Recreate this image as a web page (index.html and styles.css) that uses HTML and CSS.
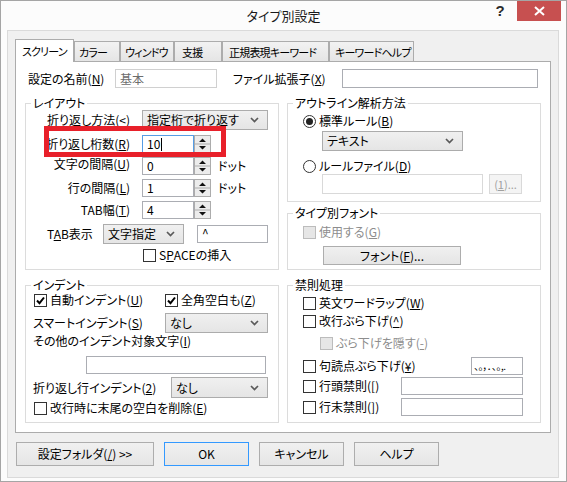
FILE: index.html
```html
<!DOCTYPE html>
<html>
<head>
    <meta charset="utf-8">
    <title>タイプ別設定</title>
    <link rel="stylesheet" href="styles.css">
</head>
<body>
<div class="window">
    <div class="titlebar">
        <div class="title">タイプ別設定</div>
        <div class="caption-buttons">
            <div class="help-button">?</div>
            <div class="close-button">
                <svg width="11" height="10" viewBox="0 0 11 10"><path d="M1 1 L10 9 M10 1 L1 9" stroke="#fff" stroke-width="2"/></svg>
            </div>
        </div>
    </div>

    <div class="client">
        <div class="tabs">
            <div class="tab active">スクリーン</div>
            <div class="tab">カラー</div>
            <div class="tab">ウィンドウ</div>
            <div class="tab">支援</div>
            <div class="tab">正規表現キーワード</div>
            <div class="tab">キーワードヘルプ</div>
        </div>

        <div class="page">
            <div class="name-row">
                <span class="name-label">設定の名前(<u>N</u>)</span>
                <div class="textbox readonly name-box">基本</div>
                <span class="ext-label">ファイル拡張子(<u>X</u>)</span>
                <div class="textbox ext-box"></div>
            </div>

            <div class="columns">
                <!-- left column -->
                <div class="column">
                    <fieldset class="group layout">
                        <legend>レイアウト</legend>
                        <div class="row row-method">
                            <span class="field-label">折り返し方法(<u>&lt;</u>)</span>
                            <div class="combo method-combo">
                                <span>指定桁で折り返す</span>
                                <svg class="chev" width="9" height="6" viewBox="0 0 9 6"><path d="M1 1 L4.5 4.5 L8 1" fill="none" stroke="#5a5a5a" stroke-width="1.7"/></svg>
                            </div>
                        </div>
                        <div class="row row-num first-num">
                            <span class="field-label">折り返し桁数(<u>R</u>)</span>
                            <div class="spin-field">
                                <div class="textbox num focused">10<span class="caret"></span></div>
                                <svg class="spin" width="17" height="18" viewBox="0 0 17 18"><rect x="0.5" y="0.5" width="16" height="17" fill="#ececec" stroke="#acacac"/><line x1="1" y1="9" x2="16" y2="9" stroke="#acacac"/><path d="M5 7 L8.5 3.5 L12 7 Z M5 11 L8.5 14.5 L12 11 Z" fill="#111"/></svg>
                            </div>
                            <div class="highlight"></div>
                        </div>
                        <div class="row row-num">
                            <span class="field-label raised">文字の間隔(<u>U</u>)</span>
                            <div class="spin-field">
                                <div class="textbox num">0</div>
                                <svg class="spin" width="17" height="18" viewBox="0 0 17 18"><rect x="0.5" y="0.5" width="16" height="17" fill="#ececec" stroke="#acacac"/><line x1="1" y1="9" x2="16" y2="9" stroke="#acacac"/><path d="M5 7 L8.5 3.5 L12 7 Z M5 11 L8.5 14.5 L12 11 Z" fill="#111"/></svg>
                            </div>
                            <span class="unit">ドット</span>
                        </div>
                        <div class="row row-num">
                            <span class="field-label">行の間隔(<u>L</u>)</span>
                            <div class="spin-field">
                                <div class="textbox num">1</div>
                                <svg class="spin" width="17" height="18" viewBox="0 0 17 18"><rect x="0.5" y="0.5" width="16" height="17" fill="#ececec" stroke="#acacac"/><line x1="1" y1="9" x2="16" y2="9" stroke="#acacac"/><path d="M5 7 L8.5 3.5 L12 7 Z M5 11 L8.5 14.5 L12 11 Z" fill="#111"/></svg>
                            </div>
                            <span class="unit">ドット</span>
                        </div>
                        <div class="row row-num">
                            <span class="field-label">TAB幅(<u>T</u>)</span>
                            <div class="spin-field">
                                <div class="textbox num">4</div>
                                <svg class="spin" width="17" height="18" viewBox="0 0 17 18"><rect x="0.5" y="0.5" width="16" height="17" fill="#ececec" stroke="#acacac"/><line x1="1" y1="9" x2="16" y2="9" stroke="#acacac"/><path d="M5 7 L8.5 3.5 L12 7 Z M5 11 L8.5 14.5 L12 11 Z" fill="#111"/></svg>
                            </div>
                        </div>
                        <div class="row row-tabview">
                            <span class="tabview-label">T<u>A</u>B表示</span>
                            <div class="combo tabview-combo">
                                <span>文字指定</span>
                                <svg class="chev" width="9" height="6" viewBox="0 0 9 6"><path d="M1 1 L4.5 4.5 L8 1" fill="none" stroke="#5a5a5a" stroke-width="1.7"/></svg>
                            </div>
                            <div class="textbox tabchar-box">^</div>
                        </div>
                        <div class="row row-space">
                            <span class="check"></span>S<u>P</u>ACEの挿入
                        </div>
                    </fieldset>

                    <fieldset class="group indent">
                        <legend>インデント</legend>
                        <div class="row row-auto">
                            <span class="auto-item"><span class="check"><svg width="9" height="9" viewBox="0 0 9 9"><path d="M1 4.5 L3.5 7.2 L8 1.5" fill="none" stroke="#000" stroke-width="2"/></svg></span>自動インデント(<u>U</u>)</span>
                            <span class="check"><svg width="9" height="9" viewBox="0 0 9 9"><path d="M1 4.5 L3.5 7.2 L8 1.5" fill="none" stroke="#000" stroke-width="2"/></svg></span>全角空白も(<u>Z</u>)
                        </div>
                        <div class="row row-smart">
                            <span class="smart-label">スマートインデント(<u>S</u>)</span>
                            <div class="combo smart-combo">
                                <span>なし</span>
                                <svg class="chev" width="9" height="6" viewBox="0 0 9 6"><path d="M1 1 L4.5 4.5 L8 1" fill="none" stroke="#5a5a5a" stroke-width="1.7"/></svg>
                            </div>
                        </div>
                        <div class="row row-other">その他のインデント対象文字(<u>I</u>)</div>
                        <div class="row row-otherbox">
                            <div class="textbox other-box"></div>
                        </div>
                        <div class="row row-wrapindent">
                            <span class="wrapindent-label">折り返し行インデント(<u>2</u>)</span>
                            <div class="combo wrapindent-combo">
                                <span>なし</span>
                                <svg class="chev" width="9" height="6" viewBox="0 0 9 6"><path d="M1 1 L4.5 4.5 L8 1" fill="none" stroke="#5a5a5a" stroke-width="1.7"/></svg>
                            </div>
                        </div>
                        <div class="row row-trim">
                            <span class="check"></span>改行時に末尾の空白を削除(<u>E</u>)
                        </div>
                    </fieldset>
                </div>

                <!-- right column -->
                <div class="column">
                    <fieldset class="group outline">
                        <legend>アウトライン解析方法</legend>
                        <div class="row row-radio1">
                            <span class="radio on"></span>標準ルール(<u>B</u>)
                        </div>
                        <div class="row row-rule">
                            <div class="combo rule-combo">
                                <span>テキスト</span>
                                <svg class="chev" width="9" height="6" viewBox="0 0 9 6"><path d="M1 1 L4.5 4.5 L8 1" fill="none" stroke="#5a5a5a" stroke-width="1.7"/></svg>
                            </div>
                        </div>
                        <div class="row row-radio2">
                            <span class="radio"></span>ルールファイル(<u>D</u>)
                        </div>
                        <div class="row row-rulefile">
                            <div class="textbox disabled rulefile-box"></div>
                            <div class="button disabled browse-button">(<u>1</u>)...</div>
                        </div>
                    </fieldset>

                    <fieldset class="group typefont">
                        <legend>タイプ別フォント</legend>
                        <div class="row row-usefont">
                            <span class="check disabled"></span><span class="muted">使用する(<u>G</u>)</span>
                        </div>
                        <div class="row row-fontbtn">
                            <div class="button font-button">フォント(<u>F</u>)...</div>
                        </div>
                    </fieldset>

                    <fieldset class="group kinsoku">
                        <legend>禁則処理</legend>
                        <div class="row k-wordwrap">
                            <span class="check"></span>英文ワードラップ(<u>W</u>)
                        </div>
                        <div class="row k-eol">
                            <span class="check"></span>改行ぶら下げ(<u>^</u>)
                        </div>
                        <div class="row k-hide">
                            <span class="check disabled"></span><span class="muted">ぶら下げを隠す(<u>-</u>)</span>
                        </div>
                        <div class="row k-punct">
                            <span class="check"></span>句読点ぶら下げ(<u>¥</u>)
                            <div class="textbox punct-box">、。，．､｡,.</div>
                        </div>
                        <div class="row k-head">
                            <span class="check"></span>行頭禁則(<u>[</u>)
                            <div class="textbox kinsoku-box"></div>
                        </div>
                        <div class="row k-tail">
                            <span class="check"></span>行末禁則(<u>]</u>)
                            <div class="textbox kinsoku-box"></div>
                        </div>
                    </fieldset>
                </div>
            </div>
        </div>

        <div class="dialog-buttons">
            <div class="button folder-button">設定フォルダ(<u>/</u>) &gt;&gt;</div>
            <div class="button default ok-button">OK</div>
            <div class="button">キャンセル</div>
            <div class="button">ヘルプ</div>
        </div>
    </div>
</div>
</body>
</html>
```

FILE: styles.css
```css
* {
    box-sizing: border-box;
}

body {
    margin: 0;
    font-family: "Noto Sans CJK JP", "Noto Sans", sans-serif;
    font-size: 12px;
    line-height: 14px;
    color: #000;
    font-feature-settings: "palt";
}

u {
    text-decoration: underline;
}

/* window frame */
.window {
    width: 567px;
    height: 482px;
    border: 1px solid #a5a5a5;
    background: #fcfcfc;
    display: flex;
    flex-direction: column;
}

.titlebar {
    height: 29px;
    display: grid;
}

.title,
.caption-buttons {
    grid-area: 1 / 1;
}

.title {
    justify-self: center;
    align-self: center;
    font-size: 13px;
    color: #1a1a1a;
    padding-top: 1px;
}

.caption-buttons {
    justify-self: end;
    display: flex;
    align-items: flex-start;
    margin-right: 5px;
}

.help-button {
    width: 26px;
    height: 20px;
    margin-right: 4px;
    display: flex;
    align-items: center;
    justify-content: center;
    font-family: "Liberation Sans", sans-serif;
    font-weight: bold;
    font-size: 15px;
    color: #2b2b2b;
}

.close-button {
    width: 44px;
    height: 20px;
    background: #c75050;
    display: flex;
    align-items: center;
    justify-content: center;
}

.client {
    flex: 1;
    margin: 0 7px 3px 6px;
    background: #f0f0f0;
    border: 1px solid #dadada;
    padding: 8px 0 0 7px;
    display: flex;
    flex-direction: column;
}

/* tab strip */
.tabs {
    height: 22px;
    display: flex;
    align-items: flex-end;
}

.tab {
    height: 20px;
    border: 1px solid #acacac;
    border-bottom: none;
    background: linear-gradient(#f2f2f2, #e5e5e5);
    padding: 2px 0 0 4px;
    font-size: 11px;
    letter-spacing: -0.8px;
    line-height: 16px;
    white-space: nowrap;
    overflow: hidden;
}

.tab.active {
    height: 23px;
    background: #fff;
    position: relative;
    z-index: 1;
    margin-bottom: -1px;
    padding: 3px 0 0 6px;
}

.tab:nth-child(1) { width: 59px; }
.tab:nth-child(2) { width: 46px; }
.tab:nth-child(3) { width: 54px; }
.tab:nth-child(4) { width: 48px; padding-left: 7px; }
.tab:nth-child(5) { width: 107px; padding-left: 6px; }
.tab:nth-child(6) { width: 85px; padding-left: 5px; }

.page {
    width: 536px;
    height: 372px;
    background: #fff;
    border: 1px solid #acacac;
    padding: 7px 0 0 9px;
}

/* controls */
.textbox {
    height: 18px;
    border: 1px solid #abadb3;
    background: #fff;
    padding: 0 4px;
    display: flex;
    align-items: center;
    white-space: nowrap;
    overflow: hidden;
}

.textbox.readonly {
    border-color: #d0d0d0;
    color: #6d6d6d;
}

.textbox.disabled {
    border-color: #d9d9d9;
}

.textbox.focused {
    border-color: #569de5;
}

.caret {
    display: inline-block;
    width: 1px;
    height: 13px;
    background: #000;
    margin-left: 1px;
}

.combo {
    height: 20px;
    border: 1px solid #acacac;
    background: linear-gradient(#f0f0f0, #e5e5e5);
    display: flex;
    align-items: center;
    justify-content: space-between;
    padding: 0 8px 0 4px;
    white-space: nowrap;
}

.button {
    height: 24px;
    border: 1px solid #adadad;
    background: linear-gradient(#f0f0f0, #e5e5e5);
    display: flex;
    align-items: center;
    justify-content: center;
    white-space: nowrap;
}

.button.default {
    border-color: #3399ff;
}

.button.disabled {
    border-color: #d9d9d9;
    background: #f4f4f4;
    color: #a0a0a0;
}

.check {
    width: 13px;
    height: 13px;
    flex: none;
    border: 1px solid #333;
    background: #fff;
    margin-right: 3px;
    display: flex;
    align-items: center;
    justify-content: center;
}

.check.disabled {
    border-color: #bcbcbc;
    background: #e6e6e6;
}

.radio {
    width: 13px;
    height: 13px;
    flex: none;
    border: 1px solid #333;
    border-radius: 50%;
    background: #fff;
    margin-right: 3px;
    display: flex;
    align-items: center;
    justify-content: center;
}

.radio.on::after {
    content: "";
    width: 7px;
    height: 7px;
    border-radius: 50%;
    background: #222;
}

.muted {
    color: #8d8d8d;
}

/* name row */
.name-row {
    display: flex;
    align-items: center;
    height: 19px;
    padding-left: 3px;
}

.name-label {
    width: 87px;
}

.name-box {
    width: 102px;
    height: 19px;
}

.ext-label {
    width: 109px;
    margin-left: 16px;
}

.ext-box {
    width: 196px;
    height: 19px;
}

.columns {
    display: grid;
    grid-template-columns: 254px 254px;
    column-gap: 8px;
    margin-top: 8px;
}

.column {
    display: flex;
    flex-direction: column;
}

/* group boxes */
.group {
    margin: 0;
    padding: 0;
    border: 1px solid #dcdcdc;
    min-width: 0;
}

.group legend {
    margin-left: 5px;
    padding: 0 2px;
    line-height: 14px;
}

.row {
    display: flex;
    align-items: center;
    white-space: nowrap;
}

/* layout group */
.layout {
    padding-bottom: 7px;
}

.field-label {
    width: 104px;
    margin-right: 12px;
    text-align: right;
}

.field-label.raised {
    margin-bottom: 4px;
}

.row-method {
    height: 20px;
}

.method-combo {
    width: 126px;
}

.row-num {
    height: 18px;
    margin-top: 4px;
}

.first-num {
    margin-top: 5px;
    position: relative;
}

.spin-field {
    display: flex;
}

.num {
    width: 52px;
}

.spin {
    display: block;
}

.unit {
    margin-left: 7px;
}

.highlight {
    position: absolute;
    left: 18px;
    top: -9px;
    width: 182px;
    height: 31px;
    border: 5px solid #e8202a;
}

.row-tabview {
    height: 20px;
    margin-top: 5px;
    padding-left: 21px;
}

.tabview-label {
    width: 56px;
}

.tabview-combo {
    width: 81px;
}

.tabchar-box {
    width: 71px;
    margin-left: 13px;
    align-items: flex-start;
}

.row-space {
    height: 14px;
    margin-top: 4px;
    padding-left: 117px;
}

/* indent group */
.indent {
    margin-top: 8px;
    padding-bottom: 6px;
}

.row-auto {
    height: 16px;
    padding-left: 8px;
}

.auto-item {
    width: 131px;
    display: flex;
    align-items: center;
}

.row-smart {
    height: 20px;
    margin-top: 5px;
    padding-left: 7px;
}

.smart-label {
    width: 132px;
}

.smart-combo {
    width: 103px;
}

.row-other {
    height: 14px;
    margin-top: 1px;
    padding-left: 7px;
}

.row-otherbox {
    height: 18px;
    margin-top: 8px;
    padding-left: 60px;
}

.other-box {
    width: 180px;
}

.row-wrapindent {
    height: 21px;
    margin-top: 3px;
    padding-left: 7px;
}

.wrapindent-label {
    width: 138px;
}

.wrapindent-combo {
    width: 97px;
    height: 21px;
}

.row-trim {
    height: 16px;
    margin-top: 2px;
    padding-left: 8px;
}

/* outline group */
.outline {
    padding-bottom: 7px;
}

.row-radio1 {
    height: 14px;
    margin-top: 4px;
    padding-left: 15px;
}

.row-rule {
    height: 20px;
    margin-top: 3px;
    padding-left: 34px;
}

.rule-combo {
    width: 141px;
}

.row-radio2 {
    height: 14px;
    margin-top: 8px;
    padding-left: 15px;
}

.row-rulefile {
    height: 20px;
    margin-top: 1px;
    padding-left: 34px;
}

.rulefile-box {
    width: 161px;
    height: 20px;
}

.browse-button {
    width: 33px;
    height: 20px;
    margin-left: 6px;
    font-size: 11px;
}

/* type font group */
.typefont {
    margin-top: 4px;
    padding-bottom: 4px;
}

.row-usefont {
    height: 14px;
    margin-top: 5px;
    padding-left: 15px;
}

.row-fontbtn {
    height: 19px;
    margin-top: 7px;
    padding-left: 35px;
}

.font-button {
    width: 138px;
    height: 19px;
}

/* kinsoku group */
.kinsoku {
    margin-top: 8px;
    padding-bottom: 6px;
}

.kinsoku .row {
    padding-left: 15px;
}

.k-wordwrap {
    height: 14px;
    margin-top: 4px;
}

.k-eol {
    height: 14px;
    margin-top: 4px;
}

.kinsoku .k-hide {
    height: 14px;
    margin-top: 8px;
    padding-left: 32px;
}

.k-punct {
    height: 18px;
    margin-top: 7px;
}

.k-head {
    height: 18px;
    margin-top: 2px;
}

.k-tail {
    height: 18px;
    margin-top: 3px;
}

.kinsoku .textbox {
    margin-left: auto;
    margin-right: 17px;
}

.punct-box {
    width: 52px;
    font-size: 10px;
    letter-spacing: -0.5px;
    padding: 0 2px;
}

.kinsoku-box {
    width: 122px;
}

/* bottom buttons */
.dialog-buttons {
    display: flex;
    margin-top: 9px;
    padding-left: 1px;
}

.folder-button {
    width: 138px;
}

.dialog-buttons .button + .button {
    width: 85px;
    margin-left: 10px;
}

.dialog-buttons .ok-button {
    margin-left: auto;
}
```
